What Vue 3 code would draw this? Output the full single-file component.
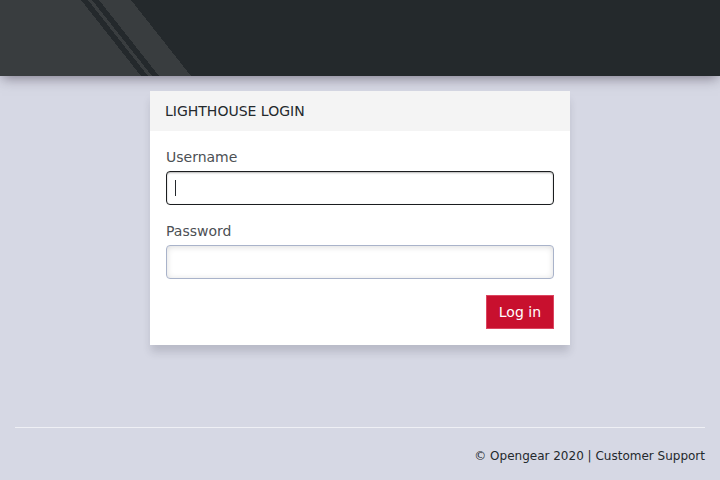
<script setup>
import { ref, onMounted } from 'vue'

const username = ref('')
const password = ref('')
const usernameInput = ref(null)

onMounted(() => usernameInput.value.focus())
</script>

<template>
  <div class="page">
    <header class="banner">
      <svg class="stripes" viewBox="0 0 192 76" aria-hidden="true">
        <path d="M0 0H81L141 76H0Z" />
        <path d="M88 0H92L152 76H148Z" />
        <path d="M99 0H131L191 76H159Z" />
      </svg>
    </header>

    <main class="content">
      <section class="panel">
        <h1 class="panel-title">LIGHTHOUSE LOGIN</h1>
        <form class="panel-body" @submit.prevent>
          <div class="field">
            <label for="username">Username</label>
            <div class="control">
              <input
                id="username"
                ref="usernameInput"
                v-model="username"
                :class="{ empty: !username }"
                type="text"
                autocomplete="username"
              />
              <span v-if="!username" class="caret" aria-hidden="true"></span>
            </div>
          </div>
          <div class="field">
            <label for="password">Password</label>
            <input id="password" v-model="password" type="password" autocomplete="current-password" />
          </div>
          <button class="submit" type="submit">Log in</button>
        </form>
      </section>
    </main>

    <footer class="footer">
      <span>© Opengear 2020 | <a href="#">Customer Support</a></span>
    </footer>
  </div>
</template>

<style>
body {
  margin: 0;
  background: #d6d8e4;
}
</style>

<style scoped>
.page {
  display: flex;
  flex-direction: column;
  min-height: 100vh;
  box-sizing: border-box;
  color: #24292d;
  font-family: "DejaVu Sans", sans-serif;
  font-size: 14px;
  line-height: 20px;
}

.banner {
  background: #24292c;
  box-shadow: 0 4px 12px -2px rgba(40, 30, 50, 0.5);
}

.stripes {
  display: block;
  height: 76px;
  fill: #393d3f;
  shape-rendering: crispEdges;
}

.content {
  flex: 1;
  padding: 15px;
}

.panel {
  max-width: 420px;
  margin: 0 auto;
  background: #fff;
  box-shadow: 0 8px 8px -1px rgba(40, 40, 60, 0.17);
}

.panel-title {
  margin: 0;
  padding: 10px 15px;
  background: #f4f4f4;
  font-size: 14px;
  font-weight: 400;
}

.panel-body {
  display: flex;
  flex-direction: column;
  gap: 16px;
  padding: 16px;
}

.field {
  display: flex;
  flex-direction: column;
  gap: 4px;
}

.field label {
  color: #4c5054;
}

.control {
  display: flex;
  position: relative;
}

.field input {
  box-sizing: border-box;
  width: 100%;
  height: 34px;
  padding: 6px 8px;
  border: 1px solid #a9b3ca;
  border-radius: 4px;
  outline: none;
  background: #fff;
  box-shadow: inset 0 1px 6px rgba(0, 0, 0, 0.14);
  color: #24292d;
  font: inherit;
}

.field input:focus {
  border-color: #1b1d1f;
  box-shadow: inset 0 1px 2px rgba(0, 0, 0, 0.3);
}

.field input.empty {
  caret-color: transparent;
}

/* Steady caret over the empty, focused field */
.caret {
  display: none;
  position: absolute;
  top: 9px;
  left: 9px;
  width: 1px;
  height: 16px;
  background: #24292d;
  pointer-events: none;
}

.field input:focus + .caret {
  display: block;
}

.submit {
  align-self: flex-end;
  height: 34px;
  padding: 0 12px;
  border: 1px solid #dc4560;
  background: #c8102e;
  color: #fff;
  font: inherit;
}

.footer {
  margin: 0 15px;
  padding: 18px 0 14px;
  border-top: 1px solid #eff0f5;
  font-size: 12px;
  text-align: right;
}

.footer a {
  color: inherit;
  text-decoration: none;
}
</style>
